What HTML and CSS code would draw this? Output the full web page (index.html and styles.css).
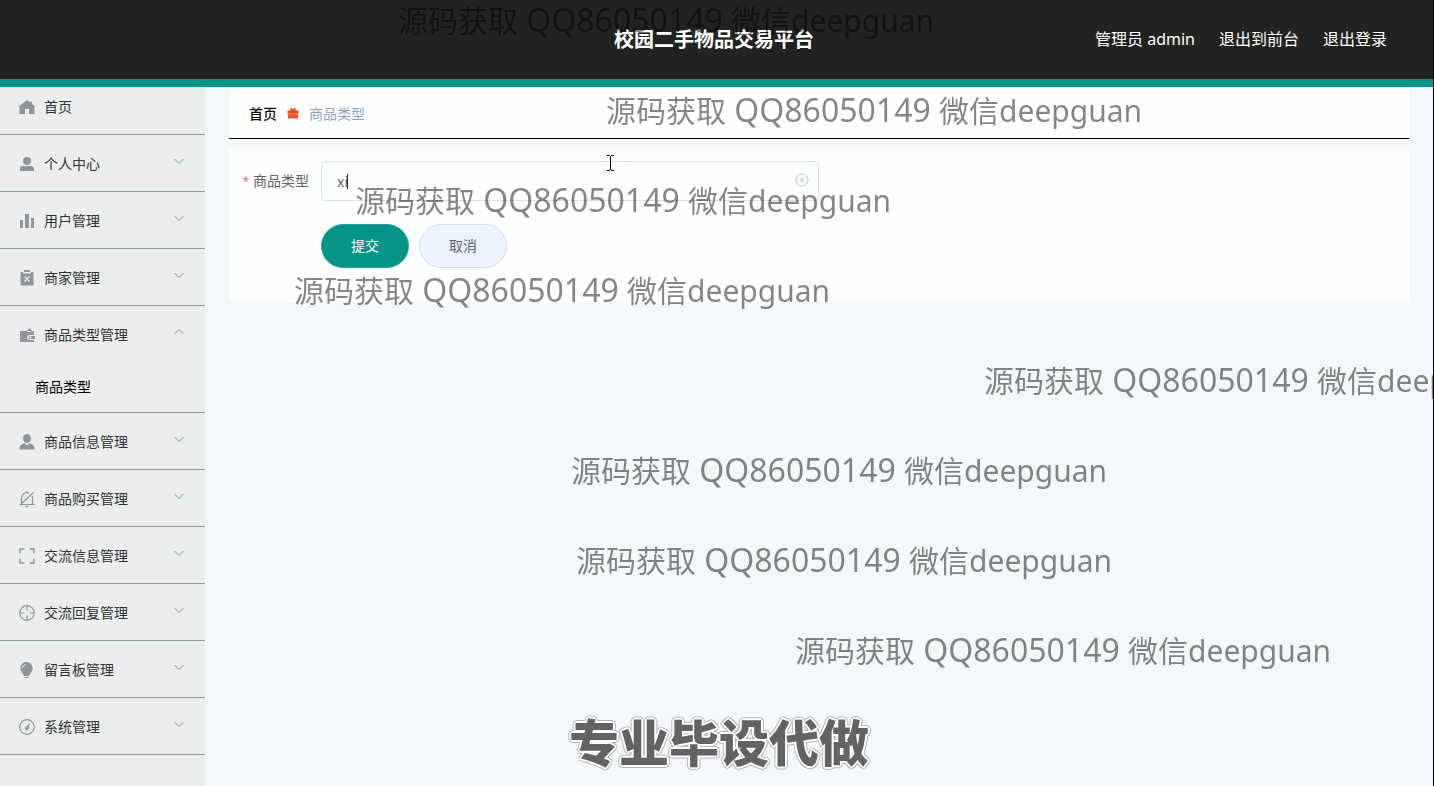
FILE: index.html
```html
<!DOCTYPE html>
<html lang="zh-CN">
<head>
  <meta charset="UTF-8" />
  <meta name="viewport" content="width=device-width, initial-scale=1" />
  <title>校园二手物品交易平台</title>
  <link rel="stylesheet" href="styles.css">
</head>
<body>

<header class="header">
  <h1 class="header-title">校园二手物品交易平台</h1>
  <div class="header-user">
    <span>管理员 admin</span>
    <a href="#front">退出到前台</a>
    <a href="#logout">退出登录</a>
  </div>
</header>

<div class="layout">

  <!-- 侧边菜单 -->
  <nav class="sidebar">
    <a class="menu-item" href="#home">
      <svg class="icon" viewBox="0 0 18 18"><path fill="currentColor" d="M9 2 1.500 8v8H7v-5h4v5h5.500V8L14 6V3.500h-1.500v1.300z"/></svg>
      <span class="menu-text">首页</span>
    </a>
    <a class="menu-item" href="#center">
      <svg class="icon" viewBox="0 0 18 18"><g fill="currentColor"><circle cx="9" cy="6" r="4"/><path d="M2 16v-2a3 3 0 0 1 3-3h8a3 3 0 0 1 3 3v2z"/></g></svg>
      <span class="menu-text">个人中心</span>
      <svg class="arrow" viewBox="0 0 12 12"><path d="M1.500 4 6 8.500 10.500 4"/></svg>
    </a>
    <a class="menu-item" href="#users">
      <svg class="icon" viewBox="0 0 18 18"><path fill="currentColor" d="M2 8h3v8H2zM7 2h4v14H7zM13 6h3v10h-3z"/></svg>
      <span class="menu-text">用户管理</span>
      <svg class="arrow" viewBox="0 0 12 12"><path d="M1.500 4 6 8.500 10.500 4"/></svg>
    </a>
    <a class="menu-item" href="#shops">
      <svg class="icon" viewBox="0 0 18 18"><path fill="currentColor" d="M6 1h6v2H6zM2.500 3H5v1.500h8V3h2.500v13.500h-13z"/><path d="m6.500 7.500 5 5m0-5-5 5" stroke="#ebeeec" stroke-width="1.300"/></svg>
      <span class="menu-text">商家管理</span>
      <svg class="arrow" viewBox="0 0 12 12"><path d="M1.500 4 6 8.500 10.500 4"/></svg>
    </a>
    <a class="menu-item menu-open" href="#types">
      <svg class="icon" viewBox="0 0 18 18"><path fill="currentColor" d="M2 5h6l4-3 2 3h2v4h-4.500a2 2 0 0 0 0 5H16v2H2z"/><path fill="currentColor" d="M12 10h5v3h-5a1.500 1.500 0 0 1 0-3z"/><path d="M9 5.500h4" stroke="#ebeeec"/><circle cx="12.500" cy="11.500" r="1" fill="#ebeeec"/></svg>
      <span class="menu-text">商品类型管理</span>
      <svg class="arrow" viewBox="0 0 12 12"><path d="M1.500 8 6 3.500 10.500 8"/></svg>
    </a>
    <a class="submenu-item" href="#type-list">商品类型</a>
    <a class="menu-item" href="#goods">
      <svg class="icon" viewBox="0 0 18 18"><g fill="currentColor"><ellipse cx="9" cy="5.500" rx="4" ry="4.500"/><path d="M1.500 16.500c0-4 2-5.500 5-6.500L9 12.500l2.500-2.500c3 1 5 2.500 5 6.500z"/></g></svg>
      <span class="menu-text">商品信息管理</span>
      <svg class="arrow" viewBox="0 0 12 12"><path d="M1.500 4 6 8.500 10.500 4"/></svg>
    </a>
    <a class="menu-item" href="#orders">
      <svg class="icon" viewBox="0 0 18 18"><g fill="none" stroke="currentColor" stroke-width="1.200"><path d="M3.500 14V8a5.500 5.500 0 0 1 8-4.700M14 6c.4.700.5 1.300.5 2v6M1.500 14.500h15M15.500 2.500l-13 12M9 1v1.500M7.500 16.700h3"/></g></svg>
      <span class="menu-text">商品购买管理</span>
      <svg class="arrow" viewBox="0 0 12 12"><path d="M1.500 4 6 8.500 10.500 4"/></svg>
    </a>
    <a class="menu-item" href="#messages">
      <svg class="icon" viewBox="0 0 18 18"><path fill="none" stroke="currentColor" stroke-width="1.400" d="M2 6.500V2h4.500M11.500 2H16v4.500M16 11.500V16h-4.500M6.500 16H2v-4.500"/></svg>
      <span class="menu-text">交流信息管理</span>
      <svg class="arrow" viewBox="0 0 12 12"><path d="M1.500 4 6 8.500 10.500 4"/></svg>
    </a>
    <a class="menu-item" href="#replies">
      <svg class="icon" viewBox="0 0 18 18"><g fill="none" stroke="currentColor" stroke-width="1.200"><circle cx="9" cy="9" r="7.300"/><path d="M9 2v4.500M9 11.500V16M2 9h4.500M11.500 9H16"/></g></svg>
      <span class="menu-text">交流回复管理</span>
      <svg class="arrow" viewBox="0 0 12 12"><path d="M1.500 4 6 8.500 10.500 4"/></svg>
    </a>
    <a class="menu-item" href="#board">
      <svg class="icon" viewBox="0 0 18 18"><path fill="currentColor" d="M8.500 1A6.300 6.300 0 0 0 4.500 12l1.500 3h5l1.500-3a6.300 6.300 0 0 0-4-11zM6.500 16h4v1h-4z"/><path d="M4.500 7A4 4 0 0 1 8 3.500" fill="none" stroke="#ebeeec"/></svg>
      <span class="menu-text">留言板管理</span>
      <svg class="arrow" viewBox="0 0 12 12"><path d="M1.500 4 6 8.500 10.500 4"/></svg>
    </a>
    <a class="menu-item" href="#system">
      <svg class="icon" viewBox="0 0 18 18"><circle cx="9" cy="9" r="7.300" fill="none" stroke="currentColor" stroke-width="1.200"/><path fill="currentColor" d="m12 4.500-1.500 6.500a1.800 1.800 0 1 1-2.500-2z"/></svg>
      <span class="menu-text">系统管理</span>
      <svg class="arrow" viewBox="0 0 12 12"><path d="M1.500 4 6 8.500 10.500 4"/></svg>
    </a>
  </nav>

  <main class="main">
    <div class="breadcrumb">
      <a href="#home">首页</a>
      <svg class="gift" viewBox="0 0 12 12"><path fill="#f0441c" d="M.5 3.500H4L3 1.500l1-.7 2 1.500L8 .8l1 .7-1 2h3.500v3.200H.5z"/><path fill="#e8552f" d="M1 6.500h10v5H1z"/><path d="M1 6.800h3.500M7.500 6.800H11" stroke="#ffb08c" stroke-width=".6"/></svg>
      <span class="breadcrumb-current">商品类型</span>
    </div>

    <!-- 表单 -->
    <form class="card">
      <div class="form-row">
        <label class="form-label" for="type-name">商品类型</label>
        <div class="input-box">
          <input class="input" type="text" id="type-name" value="xi" autocomplete="off" />
          <span class="caret"></span>
          <button class="clear" type="button" aria-label="清空">
            <svg viewBox="0 0 14 14"><g fill="none" stroke="#c0c4cc"><circle cx="7" cy="7" r="6"/><path d="m5 5 4 4m0-4L5 9"/></g></svg>
          </button>
        </div>
      </div>
      <div class="form-buttons">
        <button class="btn btn-primary" type="button">提交</button>
        <button class="btn" type="button">取消</button>
      </div>
    </form>
  </main>

</div>

<!-- 水印 -->
<div class="overlay">
  <span class="mark mark-1">源码获取<span class="num"> QQ86050149 </span>微信deepguan</span>
  <span class="mark mark-2">源码获取<span class="num"> QQ86050149 </span>微信deepguan</span>
  <span class="mark mark-3">源码获取<span class="num"> QQ86050149 </span>微信deepguan</span>
  <span class="mark mark-4">源码获取<span class="num"> QQ86050149 </span>微信deepguan</span>
  <span class="mark mark-5">源码获取<span class="num"> QQ86050149 </span>微信deepguan</span>
  <span class="mark mark-6">源码获取<span class="num"> QQ86050149 </span>微信deepguan</span>
  <span class="mark mark-7">源码获取<span class="num"> QQ86050149 </span>微信deepguan</span>
  <span class="mark mark-8">源码获取<span class="num"> QQ86050149 </span>微信deepguan</span>
  <strong class="slogan">专业毕设代做</strong>
  <svg class="pointer" viewBox="0 0 8 16"><path fill="none" stroke="#000" d="M1 .5h2.500l1 1V14l-1 1.500H1M8 .5H5.500l-1 1M8 15.500H5.500l-1-1.500"/></svg>
</div>

</body>
</html>
```

FILE: styles.css
```css
* {
  box-sizing: border-box;
}
body {
  margin: 0;
  min-height: 100vh;
  display: flex;
  flex-direction: column;
  background: #f4f8fa;
  border-right: 1px solid #000;
  font-family: "Noto Sans", "Noto Sans CJK SC", sans-serif;
  font-size: 14px;
  color: #303133;
}
a {
  color: inherit;
  text-decoration: none;
}

/* header */
.header {
  position: relative;
  z-index: 1;
  display: grid;
  grid-template-columns: 1fr auto 1fr;
  align-items: center;
  height: 87px;
  padding: 0 46px 0 41px;
  background: #212321;
  border-bottom: 8px solid #069486;
  color: #fff;
}
.header-title {
  grid-column: 2;
  margin: 0;
  font-size: 20px;
  line-height: 30px;
}
.header-user {
  display: flex;
  justify-content: flex-end;
  gap: 24px;
  padding-bottom: 4px;
  font-size: 16px;
  white-space: nowrap;
}

/* sidebar */
.layout {
  flex: 1;
  display: flex;
}
.sidebar {
  flex: none;
  width: 205px;
  margin-top: -9px;
  background: #ebeeec;
}
.menu-item {
  display: flex;
  align-items: center;
  height: 57px;
  padding: 0 20px 0 18px;
  border-bottom: 1px solid #8b9c97;
}
.menu-open {
  border-bottom-color: transparent;
}
.icon {
  width: 18px;
  height: 18px;
  margin: 2px 8px 0 0;
  color: #909399;
}
.menu-text {
  flex: 1;
}
.arrow {
  width: 12px;
  height: 12px;
  margin-bottom: 4px;
  fill: none;
  stroke: #6fa597;
}
.submenu-item {
  display: block;
  height: 50px;
  padding-left: 35px;
  border-bottom: 1px solid #8b9c97;
  line-height: 48px;
  color: #000;
}

/* content */
.main {
  flex: 1;
  min-width: 0;
  padding: 0 24px;
}
.breadcrumb {
  display: flex;
  align-items: center;
  height: 52px;
  padding: 0 20px;
  background: #fdfffe;
  border-bottom: 1px solid #000;
  color: #111;
  font-weight: 500;
}
.gift {
  width: 12px;
  height: 12px;
  margin: 0 10px;
}
.breadcrumb-current {
  color: #8fa2bd;
  font-weight: 400;
}
.card {
  margin-top: 10px;
  padding: 12px 12px 34px;
  background: #fdfffe;
}
.form-row {
  display: flex;
}
.form-label {
  width: 80px;
  padding-right: 12px;
  line-height: 40px;
  text-align: right;
  white-space: nowrap;
  color: #606266;
}
.form-label::before {
  content: "*";
  margin-right: 4px;
  font-size: 12px;
  color: #e07070;
}
.input-box {
  position: relative;
  flex: 1;
  max-width: 498px;
}
.input {
  display: block;
  width: 100%;
  height: 40px;
  padding: 0 30px 0 15px;
  border: 1px solid #dcdfe0;
  border-radius: 4px;
  background: transparent;
  font: inherit;
  color: #606266;
  outline: none;
}
.caret {
  position: absolute;
  left: 26px;
  top: 13px;
  width: 1px;
  height: 15px;
  background: #222;
}
.clear {
  position: absolute;
  right: 10px;
  top: 12px;
  width: 14px;
  height: 14px;
  padding: 0;
  border: none;
  background: none;
}
.clear svg {
  display: block;
}
.form-buttons {
  display: flex;
  gap: 10px;
  margin: 22px 0 0 80px;
}
.btn {
  width: 88px;
  height: 44px;
  padding: 0 0 2px;
  border: 1px solid #d5dded;
  border-radius: 22px;
  background: #ebf4fe;
  font: inherit;
  color: #606266;
  cursor: pointer;
}
.btn-primary {
  border-color: #2aa3a0;
  background: #069486;
  color: #fff;
}

/* watermark layer */
.overlay {
  position: fixed;
  inset: 0 1px 0 0;
  z-index: 2;
  overflow: hidden;
  pointer-events: none;
}
.mark {
  position: absolute;
  font-size: 30px;
  line-height: 40px;
  white-space: nowrap;
  color: rgba(0, 0, 0, 0.48);
}
.num {
  font-size: 32px;
}
.mark-1 { left: 398px; top: 0; }
.mark-2 { left: 606px; top: 90px; }
.mark-3 { left: 355px; top: 180px; }
.mark-4 { left: 294px; top: 270px; }
.mark-5 { left: 984px; top: 360px; }
.mark-6 { left: 571px; top: 450px; }
.mark-7 { left: 576px; top: 540px; }
.mark-8 { left: 795px; top: 630px; }
.slogan {
  position: absolute;
  left: 569px;
  top: 708px;
  font-size: 50px;
  font-weight: 900;
  line-height: 70px;
  white-space: nowrap;
  color: #626463;
  text-shadow:
    2px 0 #fff, -2px 0 #fff, 0 2px #fff, 0 -2px #fff,
    1px 1px #fff, -1px 1px #fff, 1px -1px #fff, -1px -1px #fff,
    3px 0 #b4b6b5, -3px 0 #b4b6b5, 0 3px #b4b6b5, 0 -3px #b4b6b5,
    2px 2px #b4b6b5, -2px 2px #b4b6b5, 2px -2px #b4b6b5, -2px -2px #b4b6b5;
}
.pointer {
  position: absolute;
  left: 606px;
  top: 155px;
  width: 8px;
  height: 16px;
}
```
